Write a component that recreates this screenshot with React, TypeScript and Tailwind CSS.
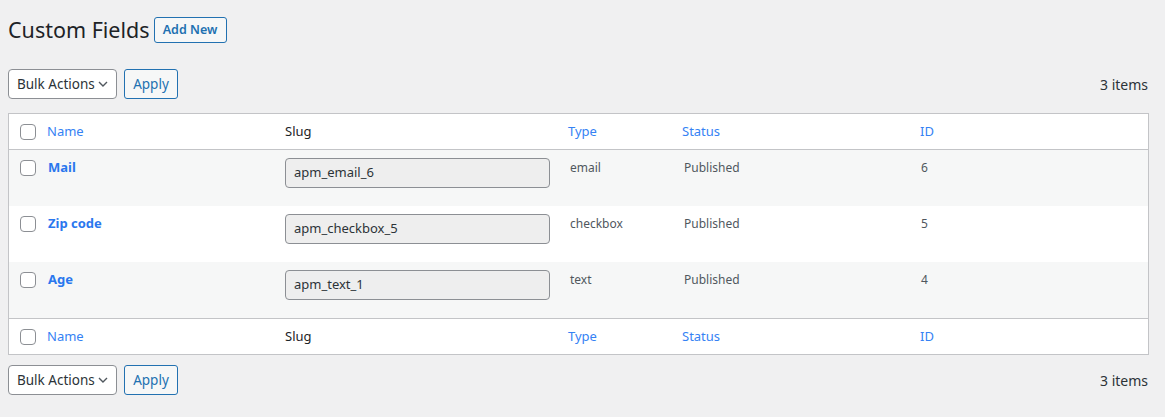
import React from "react";

const font = { fontFamily: '"Noto Sans", "Open Sans", Arial, sans-serif' };

function Checkbox() {
  return <span className="block w-4 h-4 rounded-[4px] border border-[#8c8f94] bg-white" />;
}

function Chevron() {
  return (
    <svg width="10" height="10" viewBox="0 0 10 10" className="text-[#50575e] shrink-0">
      <path d="M1 3l4 4 4-4" fill="none" stroke="currentColor" strokeWidth="1.4" />
    </svg>
  );
}

function Nav() {
  return (
    <div className="flex items-center justify-between">
      <div className="flex items-center gap-[7px]">
        <div className="h-[30px] w-[109px] rounded-[4px] border border-[#8c8f94] bg-white flex items-center justify-between pl-[8px] pr-[8px] text-[13.5px] text-[#2c3338] whitespace-nowrap">
          <span>Bulk Actions</span>
          <Chevron />
        </div>
        <div className="h-[30px] w-[54px] rounded-[3px] border border-[#2271b1] bg-[#f6f7f7] flex items-center justify-center text-[13.5px] text-[#2271b1]">
          Apply
        </div>
      </div>
      <div className="text-[14px] text-[#2c3338] pr-[9px]">3 items</div>
    </div>
  );
}

const cols = "grid grid-cols-[30px_238px_283px_114px_238px_1fr]";

function HeadRow({ top }: { top?: boolean }) {
  return (
    <div className={`${cols} h-[36px] items-center bg-white text-[13px] ${top ? "border-b" : "border-t"} border-[#c3c4c7]`}>
      <div className="pl-[11px]"><Checkbox /></div>
      <div className="pl-2 text-[#3582f4]">Name</div>
      <div className="pl-2 text-[#1d2327]">Slug</div>
      <div className="pl-2 text-[#3582f4]">Type</div>
      <div className="pl-2 text-[#3582f4]">Status</div>
      <div className="pl-2 text-[#3582f4]">ID</div>
    </div>
  );
}

const rows = [
  { name: "Mail", slug: "apm_email_6", type: "email", id: "6", bg: "bg-[#f6f7f7]" },
  { name: "Zip code", slug: "apm_checkbox_5", type: "checkbox", id: "5", bg: "bg-white" },
  { name: "Age", slug: "apm_text_1", type: "text", id: "4", bg: "bg-[#f6f7f7]" },
];

export default function App() {
  return (
    <div className="min-h-[417px] w-[1165px] bg-[#f0f0f1] px-[8px]" style={font}>
      <div className="flex items-center pt-[15px] h-[45px]">
        <h1 className="text-[21.5px] leading-[30px] text-[#1d2327] font-normal">Custom Fields</h1>
        <div className="ml-[4px] h-[26px] w-[73px] rounded-[3px] border border-[#2271b1] bg-[#f6f7f7] flex items-center justify-center text-[12.5px] font-semibold text-[#2271b1]">
          Add New
        </div>
      </div>
      <div className="mt-[24px]">
        <Nav />
      </div>
      <div className="mt-[14px] w-[1141px] border border-[#c3c4c7] bg-white">
        <HeadRow top />
        {rows.map((r) => (
          <div key={r.name} className={`${cols} h-[56px] ${r.bg} text-[12px] text-[#50575e]`}>
            <div className="pl-[11px] pt-[10px]"><Checkbox /></div>
            <div className="pl-[9px] pt-[8px] font-bold text-[13px] text-[#2a77ee]">{r.name}</div>
            <div className="pl-2 pt-[8px]">
              <div className="h-[30px] w-[265px] rounded-[4px] border border-[#8c8f94] bg-[#eeeeee] flex items-center pl-[8px] text-[13px] text-[#2c3338]">
                {r.slug}
              </div>
            </div>
            <div className="pl-[10px] pt-[9px]">{r.type}</div>
            <div className="pl-[10px] pt-[9px]">Published</div>
            <div className="pl-[9px] pt-[9px]">{r.id}</div>
          </div>
        ))}
        <HeadRow />
      </div>
      <div className="mt-[10px]">
        <Nav />
      </div>
    </div>
  );
}
